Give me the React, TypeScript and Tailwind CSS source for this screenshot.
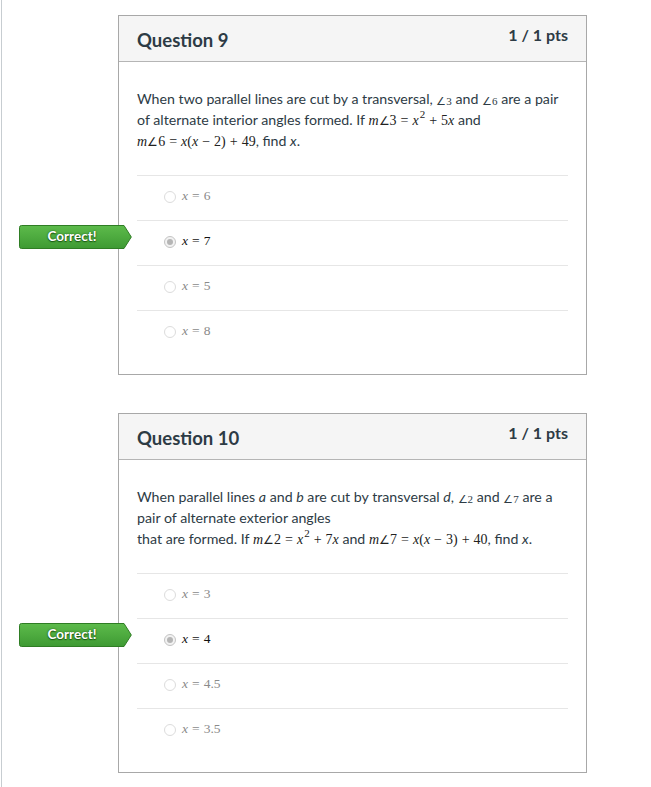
import React from "react";

const M = ({ children }: { children: React.ReactNode }) => (
  <span className="font-['Liberation_Serif',serif] text-[14px] text-[#222] leading-none">{children}</span>
);
const V = ({ children }: { children: React.ReactNode }) => <i>{children}</i>;
const Op = ({ c }: { c: string }) => <span className="mx-[4px]">{c}</span>;
const A = () => <span className="text-[12px]">∠</span>;
const Ang = ({ n }: { n: string }) => (
  <span className="font-['Liberation_Serif',serif] text-[11px] leading-none relative top-[1px]">∠{n}</span>
);
const Sq = () => <span className="text-[11px] leading-none relative -top-[7px] ml-[1px]">2</span>;

function Badge() {
  return (
    <div className="absolute left-[-118px] top-[4px] w-[113px] h-[24px]">
      <svg width="113" height="24" viewBox="0 0 113 24" className="absolute inset-0">
        <defs>
          <linearGradient id="bg" x1="0" y1="0" x2="0" y2="1">
            <stop offset="0" stopColor="#5dbb4b" />
            <stop offset="1" stopColor="#3e9a33" />
          </linearGradient>
        </defs>
        <path
          d="M2.5 0.5 H105 L112.3 12 L105 23.5 H2.5 Q0.5 23.5 0.5 21.5 V2.5 Q0.5 0.5 2.5 0.5 Z"
          fill="url(#bg)"
          stroke="#2f7d24"
          strokeWidth="1"
        />
      </svg>
      <div className="absolute left-0 top-0 w-[106px] h-[22px] flex items-center justify-center font-['Lato',sans-serif] font-bold text-[13.5px] text-white [text-shadow:0_0_2px_#1d5a14,0_1px_1px_#1d5a14]">
        Correct!
      </div>
    </div>
  );
}

function Radio({ selected }: { selected?: boolean }) {
  return selected ? (
    <span className="w-[12px] h-[12px] rounded-full border border-[#c4c4c4] bg-[#f2f2f2] flex items-center justify-center">
      <span className="w-[6px] h-[6px] rounded-full bg-[#b5b5b5]" />
    </span>
  ) : (
    <span className="w-[12px] h-[12px] rounded-full border border-[#dcdcdc] bg-white" />
  );
}

function Answer({ label, selected }: { label: React.ReactNode; selected?: boolean }) {
  return (
    <div className="relative h-[45px] border-t border-[#e6e6e6] flex items-center pl-[27px]">
      {selected && <Badge />}
      <div className="flex items-center -mt-[3px] gap-[6px]">
        <Radio selected={selected} />
        <span
          className={`font-['Liberation_Serif',serif] text-[13.5px] ${selected ? "text-[#111]" : "text-[#8a8a8a]"}`}
        >
          {label}
        </span>
      </div>
    </div>
  );
}

function Card({
  title,
  lines,
  answers,
  correct,
}: {
  title: string;
  lines: React.ReactNode[];
  answers: React.ReactNode[];
  correct: number;
}) {
  return (
    <div className="w-[469px] border border-[#a8a8a8] bg-white font-['Lato',sans-serif] text-[#2d3b45]">
      <div className="h-[46px] bg-[#f5f5f5] border-b border-[#b5b5b5] flex justify-between px-[18px]">
        <div className="text-[18.5px] font-bold leading-none pt-[15px]">{title}</div>
        <div className="text-[16px] font-bold leading-none pt-[11px]">1 / 1 pts</div>
      </div>
      <div className="px-[18px] pt-[26px] pb-[19px]">
        <div className="text-[14.2px] leading-[21px] mb-[24px]">
          {lines.map((l, i) => (
            <div key={i} className="h-[21px] whitespace-nowrap">
              {l}
            </div>
          ))}
        </div>
        <div>
          {answers.map((a, i) => (
            <Answer key={i} label={a} selected={i === correct} />
          ))}
        </div>
      </div>
    </div>
  );
}

const xe = (n: string) => (
  <>
    <i>x</i>
    <span className="mx-[4px]">=</span>
    {n}
  </>
);

export default function App() {
  return (
    <div className="w-[651px] min-h-[787px] bg-white">
      <div className="ml-px min-h-[787px] border-l border-[#c7cdd1] pl-[116px] pt-[15px] flex flex-col gap-[38px]">
        <Card
          title="Question 9"
          lines={[
            <>
              When two parallel lines are cut by a transversal, <Ang n="3" /> and <Ang n="6" /> are a pair
            </>,
            <>
              of alternate interior angles formed. If{" "}
              <M>
                <V>m</V>
                <A />3<Op c="=" />
                <V>x</V>
                <Sq />
                <Op c="+" />5<V>x</V>
              </M>{" "}
              and
            </>,
            <>
              <M>
                <V>m</V>
                <A />6<Op c="=" />
                <V>x</V>(<V>x</V>
                <Op c="−" />2)<Op c="+" />49
              </M>
              , find <i>x</i>.
            </>,
          ]}
          answers={[xe("6"), xe("7"), xe("5"), xe("8")]}
          correct={1}
        />
        <Card
          title="Question 10"
          lines={[
            <>
              When parallel lines <i>a</i> and <i>b</i> are cut by transversal <i>d</i>, <Ang n="2" /> and{" "}
              <Ang n="7" /> are a
            </>,
            <>pair of alternate exterior angles</>,
            <>
              that are formed. If{" "}
              <M>
                <V>m</V>
                <A />2<Op c="=" />
                <V>x</V>
                <Sq />
                <Op c="+" />7<V>x</V>
              </M>{" "}
              and{" "}
              <M>
                <V>m</V>
                <A />7<Op c="=" />
                <V>x</V>(<V>x</V>
                <Op c="−" />3)<Op c="+" />40
              </M>
              , find <i>x</i>.
            </>,
          ]}
          answers={[xe("3"), xe("4"), xe("4.5"), xe("3.5")]}
          correct={1}
        />
      </div>
    </div>
  );
}
